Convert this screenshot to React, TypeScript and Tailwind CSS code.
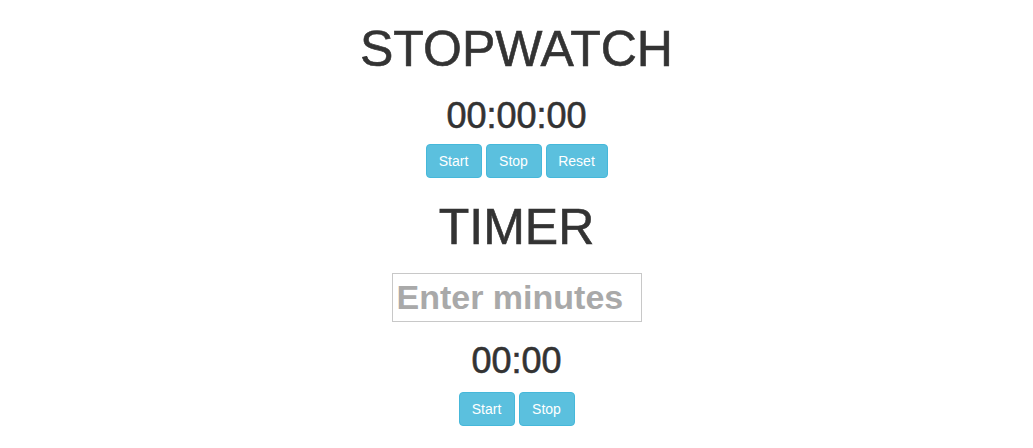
import { useState } from 'react'

function Btn({ label, width }: { label: string; width: string }) {
  return (
    <button
      className={`${width} h-[34px] text-sm leading-5 text-white bg-[#5bc0de] border border-[#46b8da] rounded-[4px]`}
    >
      {label}
    </button>
  )
}

export default function App() {
  const [minutes, setMinutes] = useState('')

  return (
    <div className="flex flex-col items-center text-[#333] font-['Liberation_Sans',Arial,sans-serif] min-h-[448px] bg-white">
      {/* Stopwatch */}
      <h1 className="mt-[24px] text-[50px] leading-none font-medium [-webkit-text-stroke:0.6px_#333]">
        STOPWATCH
      </h1>
      <h2 className="mt-[24px] text-[36px] leading-none font-medium [-webkit-text-stroke:0.6px_#333]">
        00:00:00
      </h2>
      <div className="mt-[10px] flex gap-1">
        <Btn label="Start" width="w-[56px]" />
        <Btn label="Stop" width="w-[56px]" />
        <Btn label="Reset" width="w-[62px]" />
      </div>

      {/* Timer */}
      <h1 className="mt-[24px] text-[50px] leading-none font-medium [-webkit-text-stroke:0.6px_#333]">
        TIMER
      </h1>
      <input
        value={minutes}
        onChange={(e) => setMinutes(e.target.value)}
        placeholder="Enter minutes"
        className="mt-[21px] w-[250px] h-[49px] px-[4px] border border-[#c8c8c8] text-[34px] font-bold outline-none placeholder:text-[#a9a9a9]"
      />
      <h2 className="mt-[21px] text-[36px] leading-none font-medium [-webkit-text-stroke:0.6px_#333]">
        00:00
      </h2>
      <div className="mt-[13px] flex gap-1">
        <Btn label="Start" width="w-[56px]" />
        <Btn label="Stop" width="w-[56px]" />
      </div>
    </div>
  )
}
